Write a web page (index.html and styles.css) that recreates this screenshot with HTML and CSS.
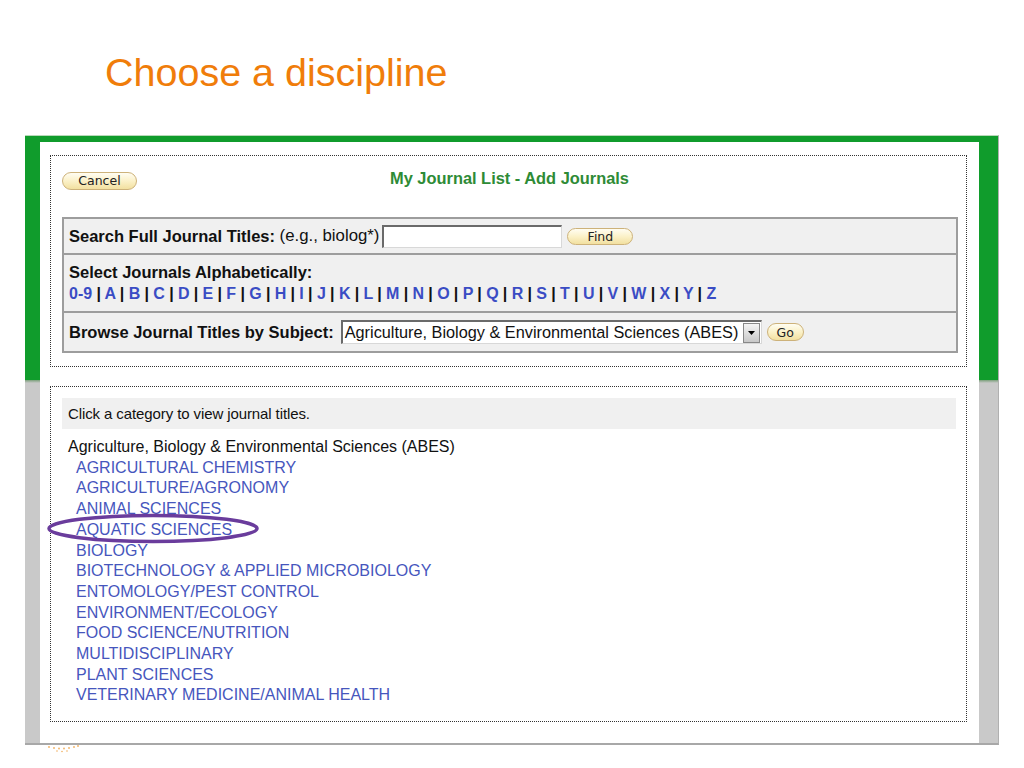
FILE: index.html
```html
<!DOCTYPE html>
<html>
<head>
<meta charset="utf-8">
<link rel="stylesheet" href="styles.css">
</head>
<body>
<h1 class="slide-title">Choose a discipline</h1>
<div class="frame">
  <div class="panel">
    <div class="box box-top">
      <div class="header">
        <div class="header-left"><span class="pill-btn btn-cancel">Cancel</span></div>
        <div class="header-title">My Journal List - Add Journals</div>
        <div class="header-right"></div>
      </div>
      <div class="search-table">
        <div class="row row-search">
          <b>Search Full Journal Titles:</b>&nbsp;<span>(e.g., biolog*)</span>
          <span class="text-input"></span>
          <span class="pill-btn btn-find">Find</span>
        </div>
        <div class="row row-alpha">
          <div><b>Select Journals Alphabetically:</b></div>
          <div class="alpha"><a>0-9</a> | <a>A</a> | <a>B</a> | <a>C</a> | <a>D</a> | <a>E</a> | <a>F</a> | <a>G</a> | <a>H</a> | <a>I</a> | <a>J</a> | <a>K</a> | <a>L</a> | <a>M</a> | <a>N</a> | <a>O</a> | <a>P</a> | <a>Q</a> | <a>R</a> | <a>S</a> | <a>T</a> | <a>U</a> | <a>V</a> | <a>W</a> | <a>X</a> | <a>Y</a> | <a>Z</a></div>
        </div>
        <div class="row row-browse">
          <b>Browse Journal Titles by Subject:</b>
          <span class="select">
            <span class="select-text">Agriculture, Biology &amp; Environmental Sciences (ABES)</span>
            <span class="select-arrow"><svg width="7" height="4" viewBox="0 0 7 4"><path d="M0 0h7L3.5 4z" fill="#000"/></svg></span>
          </span>
          <span class="pill-btn btn-go">Go</span>
        </div>
      </div>
    </div>
    <div class="box box-bottom">
      <div class="hint-bar">Click a category to view journal titles.</div>
      <div class="cat-list">
        <div class="cat-head">Agriculture, Biology &amp; Environmental Sciences (ABES)</div>
        <a class="cat">AGRICULTURAL CHEMISTRY</a>
        <a class="cat">AGRICULTURE/AGRONOMY</a>
        <a class="cat">ANIMAL SCIENCES</a>
        <a class="cat">AQUATIC SCIENCES</a>
        <a class="cat">BIOLOGY</a>
        <a class="cat">BIOTECHNOLOGY &amp; APPLIED MICROBIOLOGY</a>
        <a class="cat">ENTOMOLOGY/PEST CONTROL</a>
        <a class="cat">ENVIRONMENT/ECOLOGY</a>
        <a class="cat">FOOD SCIENCE/NUTRITION</a>
        <a class="cat">MULTIDISCIPLINARY</a>
        <a class="cat">PLANT SCIENCES</a>
        <a class="cat">VETERINARY MEDICINE/ANIMAL HEALTH</a>
      </div>
      <svg class="circle-mark" width="216" height="34" viewBox="0 0 216 34"><ellipse cx="106" cy="16.5" rx="104" ry="13" fill="none" stroke="#6a3c9c" stroke-width="3.5"/></svg>
    </div>
  </div>
</div>
<svg class="deco" width="40" height="10" viewBox="0 0 40 10">
  <g fill="#f2b060">
    <circle cx="4" cy="2" r="0.9"/><circle cx="9" cy="3" r="0.9"/><circle cx="14" cy="3.5" r="0.9"/><circle cx="19" cy="3.5" r="0.9"/><circle cx="24" cy="3" r="0.9"/><circle cx="29" cy="2" r="0.9"/><circle cx="33" cy="1" r="0.9"/>
    <circle cx="12" cy="6" r="0.8"/><circle cx="17" cy="6.5" r="0.8"/><circle cx="22" cy="6" r="0.8"/>
  </g>
</svg>
</body>
</html>
```

FILE: styles.css
```css
html, body {
  margin: 0;
  padding: 0;
  background: #ffffff;
}
body {
  font-family: "Liberation Sans", Arial, sans-serif;
  color: #111;
  width: 1024px;
  height: 768px;
  overflow: hidden;
}
.slide-title {
  margin: 49px 0 0 105px;
  font-weight: normal;
  font-size: 39.5px;
  line-height: 46px;
  color: #f07d0a;
}
.frame {
  margin: 40px 0 0 25px;
  width: 974px;
  box-sizing: border-box;
  padding: 6px 19px 0 15px;
  background: linear-gradient(to bottom, #109c2c 0, #109c2c 244px, #7aa07a 244px, #c9c9c9 247px, #c9c9c9 100%);
  border-top: 1px solid #b9d9b9;
  border-bottom: 2px solid #a8a8a8;
  border-right: 1px solid #b0b0b0;
}
.panel {
  background: #fff;
  height: 601px;
  box-sizing: border-box;
  padding: 13px 12px 0 10px;
}
.box {
  border: 1px dotted #333;
  box-sizing: border-box;
}
.box-top {
  height: 212px;
  padding: 15px 9px 0 11px;
}
.header {
  display: grid;
  grid-template-columns: 1fr auto 1fr;
  align-items: center;
  height: 18px;
  margin-bottom: 28px;
}
.header-title {
  font-weight: bold;
  font-size: 16.4px;
  color: #2e8b36;
  position: relative;
  top: -2px;
}
.pill-btn {
  display: inline-flex;
  align-items: center;
  justify-content: center;
  box-sizing: border-box;
  font-family: "DejaVu Sans", Verdana, sans-serif;
  font-size: 12.5px;
  color: #222;
  border: 1px solid #cdb27a;
  border-radius: 10px;
  background: linear-gradient(to bottom, #fffdf2 0%, #fbf1c8 50%, #f2e0a0 100%);
}
.btn-cancel {
  width: 75px;
  height: 18px;
}
.btn-find {
  width: 66px;
  height: 17px;
  margin-left: 5px;
}
.btn-go {
  width: 37px;
  height: 18px;
  margin-left: 5px;
}
.search-table {
  border: 2px solid #9d9d9d;
  background: #f0f0f0;
  width: 896px;
  box-sizing: border-box;
}
.row {
  padding: 0 5px;
  font-size: 16.5px;
}
.row + .row {
  border-top: 2px solid #9d9d9d;
}
.row-search {
  height: 34px;
  display: flex;
  align-items: center;
}
.row-search span:not([class]) {
  font-size: 16.8px;
}
.row-alpha {
  height: 56px;
  display: flex;
  flex-direction: column;
  justify-content: center;
  line-height: 21px;
}
.row-browse {
  height: 38px;
  display: flex;
  align-items: center;
}
.text-input {
  display: inline-block;
  width: 180px;
  height: 23px;
  box-sizing: border-box;
  margin-left: 3px;
  background: #fff;
  border-top: 2px solid #6a6a6a;
  border-left: 2px solid #6a6a6a;
  border-right: 1px solid #d8d8d8;
  border-bottom: 1px solid #d8d8d8;
}
.alpha {
  font-size: 16px;
  font-weight: bold;
  word-spacing: -0.15px;
}
.alpha a {
  color: #3a4cc4;
}
.select {
  display: inline-flex;
  align-items: center;
  margin-left: 7px;
  width: 421px;
  height: 24px;
  box-sizing: border-box;
  background: #fff;
  border-top: 2px solid #6a6a6a;
  border-left: 2px solid #6a6a6a;
  border-right: 1px solid #d8d8d8;
  border-bottom: 1px solid #d8d8d8;
}
.select-text {
  flex: 1;
  padding-left: 2px;
  white-space: nowrap;
  overflow: hidden;
  font-size: 16.3px;
}
.select-arrow {
  width: 17px;
  height: 20px;
  box-sizing: border-box;
  background: linear-gradient(to bottom, #f4f4f4, #c8c8c8);
  border: 1px solid #888;
  display: flex;
  align-items: center;
  justify-content: center;
  margin-right: 1px;
}
.box-bottom {
  margin-top: 19px;
  height: 336px;
  padding: 11px 10px 0 11px;
  position: relative;
}
.hint-bar {
  background: #f0f0f0;
  height: 31px;
  line-height: 31px;
  padding-left: 6px;
  font-size: 15px;
  letter-spacing: -0.1px;
}
.cat-list {
  margin-top: 8px;
  padding-left: 6px;
  font-size: 16px;
  line-height: 20.7px;
}
.cat-head {
  color: #111;
}
.cat {
  display: block;
  color: #4656bd;
  padding-left: 8px;
}
.circle-mark {
  position: absolute;
  left: -4px;
  top: 125px;
}
.deco {
  display: block;
  margin: 0 0 0 45px;
}
```
